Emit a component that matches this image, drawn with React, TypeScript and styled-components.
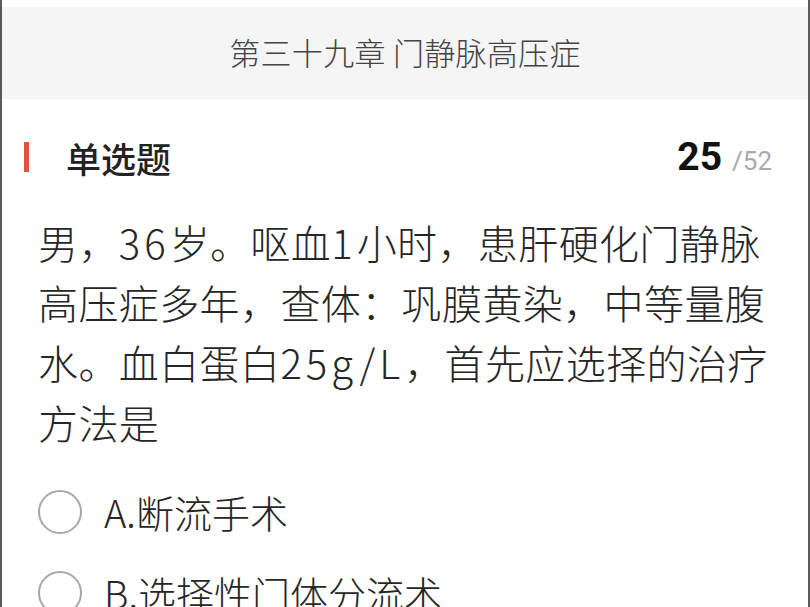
import React from 'react'
import styled, { createGlobalStyle } from 'styled-components'

const GlobalStyle = createGlobalStyle`
  html, body {
    margin: 0;
    padding: 0;
    background: #ffffff;
  }
  body {
    font-family: "Noto Sans CJK SC", "Noto Sans", sans-serif;
  }
`

type Option = {
  key: string
  text: string
}

const options: Option[] = [
  { key: 'A', text: '断流手术' },
  { key: 'B', text: '选择性门体分流术' },
]

const App: React.FC = () => {
  return (
    <Page>
      <GlobalStyle />
      <Header>
        <HeaderTitle>第三十九章 门静脉高压症</HeaderTitle>
      </Header>
      <Content>
        <TypeRow>
          <TypeLabel>
            <RedBar />
            单选题
          </TypeLabel>
          <Counter>
            <Current>25</Current>
            <Total>/52</Total>
          </Counter>
        </TypeRow>
        <Question>
          男，<Num>36</Num>岁。呕血<Num>1</Num>小时，患肝硬化门静脉高压症多年，查体：巩膜黄染，中等量腹水。血白蛋白<Num>25g/L</Num>，首先应选择的治疗方法是
        </Question>
        <OptionList>
          {options.map((o) => (
            <OptionRow key={o.key}>
              <Radio />
              <OptionText>
                {o.key}.{o.text}
              </OptionText>
            </OptionRow>
          ))}
        </OptionList>
      </Content>
    </Page>
  )
}

export default App

const Page = styled.div`
  width: 810px;
  height: 607px;
  box-sizing: border-box;
  border-left: 2px solid #5a5a5a;
  border-right: 2px solid #5a5a5a;
  padding-top: 7px;
  overflow: hidden;
  background: #fff;
`

const Header = styled.div`
  height: 92px;
  background: #f5f5f5;
  display: flex;
  align-items: center;
  justify-content: center;
`

const HeaderTitle = styled.div`
  font-size: 31px;
  font-weight: 300;
  color: #444;
  letter-spacing: 0.3px;
  margin-top: -3px;
`

const Content = styled.div`
  padding: 0 36px 0 36px;
`

const TypeRow = styled.div`
  display: flex;
  align-items: center;
  justify-content: space-between;
  height: 116px;
  margin-left: -14px;
`

const TypeLabel = styled.div`
  display: flex;
  align-items: center;
  font-size: 35px;
  font-weight: 500;
  color: #222;
`

const RedBar = styled.span`
  display: inline-block;
  width: 5px;
  height: 30px;
  background: #e0533f;
  margin-right: 37px;
`

const Counter = styled.div`
  display: flex;
  align-items: baseline;
  font-family: Roboto, "Liberation Sans", sans-serif;
`

const Current = styled.span`
  font-size: 39px;
  font-weight: 700;
  color: #111;
  margin-right: 10px;
`

const Total = styled.span`
  font-size: 26px;
  color: #aaa;
`

const Question = styled.div`
  font-size: 40px;
  font-weight: 300;
  line-height: 60px;
  letter-spacing: 0.4px;
  color: #262626;
  margin-top: -3px;
`

const Num = styled.span`
  letter-spacing: 4px;
`

const OptionList = styled.div`
  margin-top: 38px;
  display: flex;
  flex-direction: column;
  gap: 37px;
`

const OptionRow = styled.div`
  display: flex;
  align-items: center;
`

const Radio = styled.span`
  width: 40px;
  height: 40px;
  border-radius: 50%;
  border: 2px solid #a8a8a8;
  flex-shrink: 0;
  margin-right: 22px;
`

const OptionText = styled.span`
  font-size: 38px;
  font-weight: 300;
  color: #262626;
  line-height: 44px;
`
